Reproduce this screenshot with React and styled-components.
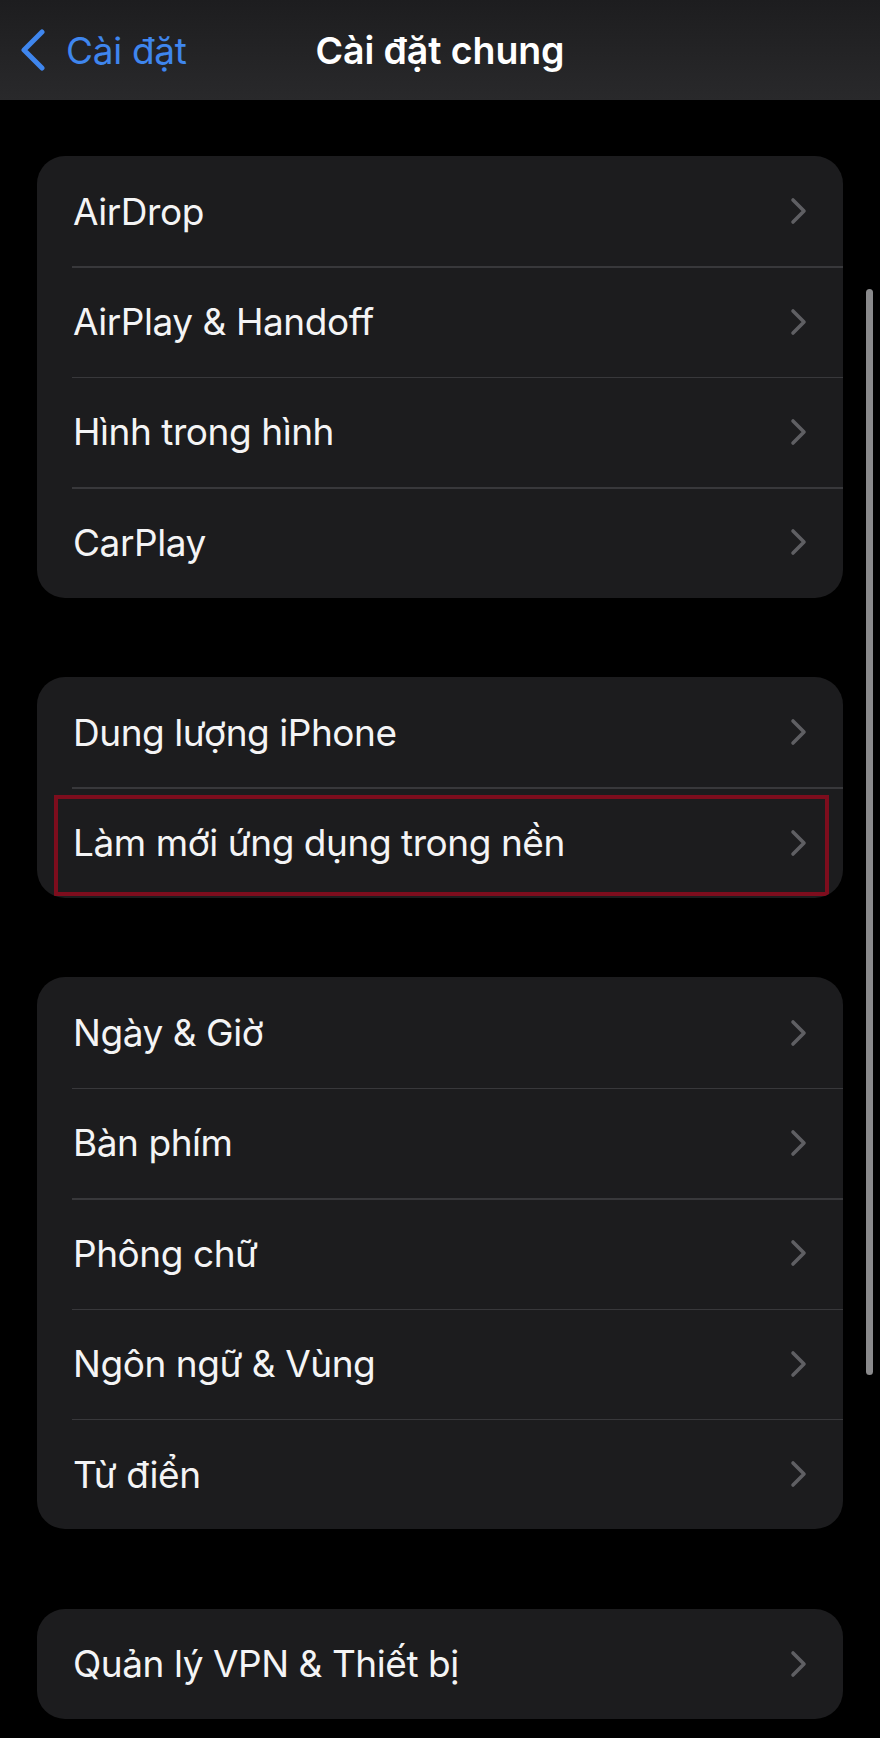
import React from "react";
import styled, { createGlobalStyle } from "styled-components";

const GlobalStyle = createGlobalStyle`
  html, body {
    margin: 0;
    padding: 0;
    background: #000;
  }
  body {
    font-family: Inter, "Noto Sans", "Liberation Sans", sans-serif;
    -webkit-font-smoothing: antialiased;
  }
`;

const Screen = styled.div`
  position: relative;
  width: 880px;
  min-height: 1738px;
  background: #000;
  color: #fff;
  overflow: hidden;
`;

const NavBar = styled.header`
  position: relative;
  height: 100px;
  display: flex;
  align-items: center;
  justify-content: center;
  background: linear-gradient(180deg, #1d1d1f 0%, #29292b 100%);
`;

const BackButton = styled.button`
  position: absolute;
  left: 20px;
  top: 0;
  bottom: 0;
  display: flex;
  align-items: center;
  gap: 20px;
  padding: 0;
  border: none;
  background: none;
  color: #3f86ee;
  font: inherit;
  font-size: 37px;
  letter-spacing: -0.3px;
  cursor: pointer;
`;

const Title = styled.h1`
  margin: 0;
  font-size: 37.5px;
  font-weight: 600;
  letter-spacing: -0.1px;
  color: #fff;
`;

const Content = styled.main`
  display: flex;
  flex-direction: column;
  gap: 79.5px;
  padding: 56px 37px 20px 37px;
`;

const Group = styled.section`
  background: #1c1c1e;
  border-radius: 28px;
  overflow: hidden;
`;

const Row = styled.div`
  position: relative;
  height: 110.4px;
  display: flex;
  align-items: center;
  justify-content: space-between;
  padding: 0 36px 0 36px;

  & + &::before {
    content: "";
    position: absolute;
    top: 0;
    left: 35px;
    right: 0;
    height: 1.5px;
    background: #38383b;
  }
`;

const Label = styled.span`
  font-size: 37px;
  font-weight: 400;
  letter-spacing: -0.45px;
  color: #f4f4f5;
`;

const Highlight = styled.div`
  position: absolute;
  top: 8px;
  bottom: 2px;
  left: 17px;
  right: 14px;
  border: 4px solid #7d0d1d;
  pointer-events: none;
`;

const ScrollIndicator = styled.div`
  position: absolute;
  right: 7px;
  top: 289px;
  width: 7px;
  height: 1086px;
  border-radius: 4px;
  background: #8a8a8c;
`;

const Chevron = () => (
  <svg width="17" height="28" viewBox="0 0 17 28" fill="none">
    <polyline
      points="3,3 14,14 3,25"
      stroke="#5f5f63"
      strokeWidth="3.6"
      strokeLinecap="round"
      strokeLinejoin="round"
    />
  </svg>
);

const BackChevron = () => (
  <svg width="26" height="42" viewBox="0 0 26 42" fill="none">
    <polyline
      points="22,3 4,21 22,39"
      stroke="#3f86ee"
      strokeWidth="5"
      strokeLinecap="round"
      strokeLinejoin="round"
    />
  </svg>
);

const groups = [
  ["AirDrop", "AirPlay & Handoff", "Hình trong hình", "CarPlay"],
  ["Dung lượng iPhone", "Làm mới ứng dụng trong nền"],
  ["Ngày & Giờ", "Bàn phím", "Phông chữ", "Ngôn ngữ & Vùng", "Từ điển"],
  ["Quản lý VPN & Thiết bị"],
];

const marked = "Làm mới ứng dụng trong nền";

export default function App() {
  return (
    <>
      <GlobalStyle />
      <Screen>
        <NavBar>
          <BackButton>
            <BackChevron />
            Cài đặt
          </BackButton>
          <Title>Cài đặt chung</Title>
        </NavBar>
        <Content>
          {groups.map((items, gi) => (
            <Group key={gi}>
              {items.map((item) => (
                <Row key={item}>
                  <Label>{item}</Label>
                  <Chevron />
                  {item === marked && <Highlight />}
                </Row>
              ))}
            </Group>
          ))}
        </Content>
        <ScrollIndicator />
      </Screen>
    </>
  );
}
